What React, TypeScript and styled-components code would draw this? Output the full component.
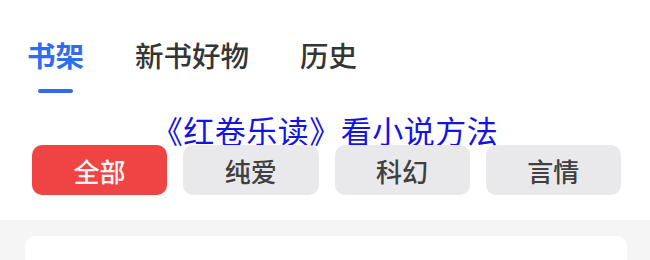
import React from 'react';
import styled, { createGlobalStyle } from 'styled-components';

const GlobalStyle = createGlobalStyle`
  html, body {
    margin: 0;
    padding: 0;
    background: #ffffff;
    font-family: "Noto Sans CJK SC", "Noto Sans", sans-serif;
  }
`;

const Page = styled.div`
  width: 650px;
  height: 260px;
  overflow: hidden;
  display: flex;
  flex-direction: column;
`;

const TabBar = styled.div`
  display: flex;
  gap: 51px;
  padding: 41px 0 0 27px;
`;

const Tab = styled.div<{ $active?: boolean }>`
  display: flex;
  flex-direction: column;
  align-items: center;
  font-size: 28.5px;
  line-height: 28px;
  font-weight: ${(p) => (p.$active ? 700 : 500)};
  color: ${(p) => (p.$active ? '#2f6cf0' : '#353535')};
`;

const Indicator = styled.div<{ $visible?: boolean }>`
  width: 35px;
  height: 4px;
  margin-top: 20px;
  border-radius: 2px;
  background: ${(p) => (p.$visible ? '#2f6cf0' : 'transparent')};
`;

const Title = styled.h1`
  margin: 21px 0 0;
  text-align: center;
  font-size: 31px;
  line-height: 31px;
  letter-spacing: 0.5px;
  font-weight: 400;
  color: #1414e2;
`;

const ChipRow = styled.div`
  display: grid;
  grid-template-columns: repeat(4, 1fr);
  gap: 16px;
  padding: 0 29px 0 32px;
`;

const Chip = styled.div<{ $active?: boolean }>`
  height: 50px;
  border-radius: 10px;
  display: flex;
  align-items: center;
  justify-content: center;
  font-size: 26px;
  font-weight: 500;
  background: ${(p) => (p.$active ? '#ef4444' : '#e9e9eb')};
  color: ${(p) => (p.$active ? '#fff5f5' : '#404040')};
`;

const Section = styled.div`
  flex: 1;
  margin-top: 25px;
  padding: 16px 23px 0 25px;
  background: #f5f5f6;
`;

const Card = styled.div`
  height: 60px;
  border-radius: 10px;
  background: #ffffff;
`;

const tabs = ['书架', '新书好物', '历史'];
const chips = ['全部', '纯爱', '科幻', '言情'];

export default function App() {
  return (
    <>
      <GlobalStyle />
      <Page>
        <TabBar>
          {tabs.map((t, i) => (
            <Tab key={t} $active={i === 0}>
              {t}
              <Indicator $visible={i === 0} />
            </Tab>
          ))}
        </TabBar>
        <Title>《红卷乐读》看小说方法</Title>
        <ChipRow>
          {chips.map((c, i) => (
            <Chip key={c} $active={i === 0}>
              {c}
            </Chip>
          ))}
        </ChipRow>
        <Section>
          <Card />
        </Section>
      </Page>
    </>
  );
}
